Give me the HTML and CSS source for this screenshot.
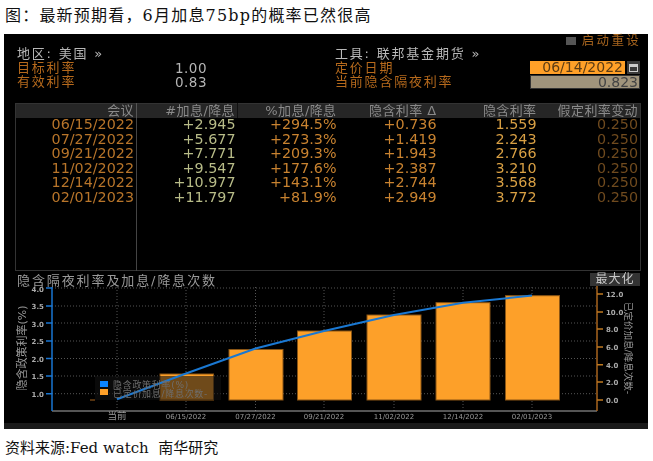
FILE: index.html
```html
<!DOCTYPE html>
<html lang="zh-CN">
<head>
<meta charset="utf-8">
<title>最新预期看</title>
<link rel="stylesheet" href="styles.css">
</head>
<body>
<h1 class="caption">图：最新预期看，6月加息75bp的概率已然很高</h1>
<main class="panel">
  <div class="reset"><span class="check"></span><span>启动重设</span></div>
  <section class="info">
    <div class="info-col">
      <div class="info-title">地区: 美国 »</div>
      <div class="info-row"><span class="lbl">目标利率</span><span class="val">1.00</span></div>
      <div class="info-row"><span class="lbl">有效利率</span><span class="val">0.83</span></div>
    </div>
    <div class="info-col right">
      <div class="info-title">工具: 联邦基金期货 »</div>
      <div class="info-row"><span class="lbl">定价日期</span>
        <span class="date-wrap"><span class="date-input">06/14/2022</span><span class="cal"><svg width="9" height="8" viewBox="0 0 9 8"><rect x="0.5" y="0.5" width="8" height="7" fill="none" stroke="#ccc"/><rect x="0" y="0" width="9" height="3" fill="#ccc"/></svg></span></span>
      </div>
      <div class="info-row"><span class="lbl">当前隐含隔夜利率</span><span class="rate-input">0.823</span></div>
    </div>
  </section>
  <table class="grid">
    <thead>
      <tr><th>会议</th><th>#加息/降息</th><th>%加息/降息</th><th>隐含利率 Δ</th><th>隐含利率</th><th>假定利率变动</th></tr>
    </thead>
    <tbody>
      <tr><td>06/15/2022</td><td>+2.945</td><td>+294.5%</td><td>+0.736</td><td>1.559</td><td>0.250</td></tr>
      <tr><td>07/27/2022</td><td>+5.677</td><td>+273.3%</td><td>+1.419</td><td>2.243</td><td>0.250</td></tr>
      <tr><td>09/21/2022</td><td>+7.771</td><td>+209.3%</td><td>+1.943</td><td>2.766</td><td>0.250</td></tr>
      <tr><td>11/02/2022</td><td>+9.547</td><td>+177.6%</td><td>+2.387</td><td>3.210</td><td>0.250</td></tr>
      <tr><td>12/14/2022</td><td>+10.977</td><td>+143.1%</td><td>+2.744</td><td>3.568</td><td>0.250</td></tr>
      <tr><td>02/01/2023</td><td>+11.797</td><td>+81.9%</td><td>+2.949</td><td>3.772</td><td>0.250</td></tr>
      <tr class="filler"><td></td><td></td><td></td><td></td><td></td><td></td></tr>
    </tbody>
  </table>
  <div class="chart-head"><span class="chart-title">隐含隔夜利率及加息/降息次数</span><span class="maxbtn">最大化</span></div>
  <svg class="chart" width="644" height="137" viewBox="4 286 644 137" xmlns="http://www.w3.org/2000/svg">
    <g class="gridlines">
      <path d="M52 288H597M52 306H597M52 323H597M52 341H597M52 358.5H597M52 376H597M52 393.7H597"/>
      <path d="M117 287V411M186 287V411M255.500 287V411M324 287V411M394 287V411M463 287V411M532 287V411"/>
    </g>
    <rect class="stub" x="90" y="399.500" width="5" height="1"/>
    <g class="bars">
      <rect x="160" y="374" width="53.500" height="26"/>
      <rect x="229" y="349.500" width="54" height="50.500"/>
      <rect x="297.500" y="331" width="54" height="69"/>
      <rect x="367" y="315" width="54" height="85"/>
      <rect x="436" y="302.700" width="54" height="97.300"/>
      <rect x="505.500" y="295.700" width="54" height="104.300"/>
    </g>
    <rect class="legend-bg" x="95" y="376" width="126" height="24"/>
    <polyline class="curve" points="117,399.300 186,373.500 255.500,348.500 324,331 394,315 463,302.700 532,295.600"/>
    <rect class="sw-blue" x="100" y="381" width="8" height="6"/>
    <rect class="sw-orange" x="100" y="389" width="8" height="6"/>
    <text class="legend-text" x="113" y="388">隐含政策利率(%)</text>
    <text class="legend-text" x="113" y="396.500">已定价加息/降息次数-</text>
    <path class="axis-x" d="M52 411H597"/>
    <path class="axis-l" d="M52 287V411"/>
    <path class="ticks-l" d="M46 288H52M46 306H52M46 323H52M46 341H52M46 358.500H52M46 376H52M46 393.700H52"/>
    <path class="axis-r" d="M597 286V411"/>
    <path class="ticks-r" d="M597 294H603M597 312H603M597 329H603M597 347H603M597 364.700H603M597 382H603M597 400H603"/>
    <g class="tick-l">
      <text x="44" y="292">4.0</text><text x="44" y="309">3.5</text><text x="44" y="326.500">3.0</text><text x="44" y="344">2.5</text><text x="44" y="361.500">2.0</text><text x="44" y="379">1.5</text><text x="44" y="396.500">1.0</text>
    </g>
    <g class="tick-r">
      <text x="606" y="297">12.0</text><text x="606" y="315">10.0</text><text x="606" y="332">8.0</text><text x="606" y="350">6.0</text><text x="606" y="367.500">4.0</text><text x="606" y="385">2.0</text><text x="606" y="403">0.0</text>
    </g>
    <g class="tick-x">
      <text class="now" x="117" y="419">当前</text><text x="186" y="419">06/15/2022</text><text x="255.500" y="419">07/27/2022</text><text x="324" y="419">09/21/2022</text><text x="394" y="419">11/02/2022</text><text x="463" y="419">12/14/2022</text><text x="532" y="419">02/01/2023</text>
    </g>
    <text class="axis-title left" transform="translate(26 348) rotate(-90)">隐含政策利率(%)</text>
    <text class="axis-title" transform="translate(625 348) rotate(90)">已定价加息/降息次数-</text>
  </svg>
  <div class="strip"></div>
</main>
<p class="source">资料来源:Fed watch&nbsp; 南华研究</p>
</body>
</html>
```
FILE: styles.css
```css
* { box-sizing: border-box; }
html, body { margin: 0; padding: 0; background: #fff; }
body {
  width: 653px;
  height: 461px;
  overflow: hidden;
  font-family: "DejaVu Serif", "Noto Sans CJK SC", serif;
  color: #111;
}
.caption {
  margin: 0;
  height: 34px;
  padding: 6px 0 0 5px;
  font-size: 16px;
  line-height: 20px;
  font-weight: 400;
  letter-spacing: 1.200px;
}
.panel {
  margin-left: 4px;
  width: 644px;
  height: 395px;
  background: #000;
  display: flex;
  flex-direction: column;
  font-family: "DejaVu Sans", "Noto Sans CJK SC", sans-serif;
  filter: blur(0.45px);
}
.reset {
  height: 12px;
  display: flex;
  justify-content: flex-end;
  align-items: center;
  gap: 6px;
  padding: 2px 7px 0 0;
  font-size: 12.500px;
  line-height: 12px;
  letter-spacing: 2.300px;
  color: #a8651e;
}
.check { width: 10px; height: 8px; background: #555; }
.info {
  height: 44px;
  display: flex;
  padding: 0 8px 0 13px;
  font-size: 13px;
}
.info-col { width: 318px; }
.info-col.right { flex: 1; }
.info-title {
  height: 15px;
  line-height: 15px;
  color: #b8b8b8;
  font-size: 13px;
  letter-spacing: 1.800px;
}
.info-row {
  display: flex;
  height: 14px;
  line-height: 14px;
  justify-content: space-between;
  align-items: center;
}
.info-col:first-child .info-row { width: 190px; }
.lbl { color: #b5691c; letter-spacing: 1.800px; font-size: 13px; }
.val { color: #b5b5b5; font-size: 13.500px; letter-spacing: 0.5px; }
.date-wrap { display: flex; gap: 2px; align-self: flex-start; }
.date-input {
  width: 95px;
  height: 13px;
  background: #ffa028;
  color: #5c3c14;
  font-size: 14px;
  line-height: 13px;
  text-align: right;
  padding-right: 2px;
}
.cal {
  width: 13px;
  height: 13px;
  background: #3a3a3a;
  display: flex;
  align-items: center;
  justify-content: center;
}
.rate-input {
  width: 110px;
  height: 14px;
  align-self: flex-start;
  background: #a0947c;
  border: 1px solid #333;
  color: #444;
  font-size: 14px;
  line-height: 12px;
  text-align: right;
  padding-right: 1px;
}
.grid {
  margin: 13px 0 0 11px;
  width: 626px;
  height: 168px;
  border-collapse: collapse;
  table-layout: fixed;
  border: 1px solid #333;
  font-size: 14.300px;
}
.grid th, .grid td { padding: 0 2px 0 0; text-align: right; white-space: nowrap; font-weight: 400; }
.grid th {
  height: 14px;
  line-height: 14px;
  font-size: 13px;
  color: #8a8a8a;
  background: #262626;
  letter-spacing: 0.4px;
}
.grid th:nth-child(1) { width: 121px; border-right: 1px solid #555; }
.grid th:nth-child(2) { width: 101px; border-right: 1px solid #111; }
.grid th:nth-child(3) { width: 101px; }
.grid th:nth-child(4) { width: 100px; }
.grid th:nth-child(5) { width: 100px; }
.grid td { height: 14.500px; line-height: 12px; vertical-align: top; }
.grid td:nth-child(1) { color: #b8752a; border-right: 1px solid #444; }
.grid td:nth-child(2) { color: #b8bc88; }
.grid td:nth-child(3) { color: #c98330; }
.grid td:nth-child(4) { color: #c98330; }
.grid td:nth-child(5) { color: #d9a044; }
.grid td:nth-child(6) { color: #6f4a1e; }
.grid .filler td { height: auto; }
.chart-head {
  height: 15px;
  display: flex;
  justify-content: space-between;
  align-items: center;
  padding: 1px 8px 0 13px;
}
.chart-title { color: #9a9a9a; font-size: 13px; letter-spacing: 1.900px; }
.maxbtn {
  width: 50px;
  height: 13px;
  background: #333;
  color: #c8c8c8;
  font-size: 12px;
  line-height: 13px;
  text-align: center;
  letter-spacing: 1px;
}
.chart { display: block; flex: none; overflow: visible; }
.gridlines path { fill: none; stroke: #555; stroke-width: 1; stroke-dasharray: 1 2; }
.stub { fill: #a8651e; }
.bars rect { fill: #fda029; stroke: #8a5514; stroke-width: 1; }
.legend-bg { fill: #111; fill-opacity: 0.6; }
.curve { fill: none; stroke: #1a78d2; stroke-width: 2; }
.sw-blue { fill: #0a84ff; }
.sw-orange { fill: #fda029; }
.legend-text { fill: #6e6e6e; font-size: 9px; letter-spacing: 0.7px; }
.axis-x { stroke: #aaa; fill: none; }
.axis-l { stroke: #1976d2; stroke-width: 1.500; fill: none; }
.ticks-l { stroke: #1976d2; stroke-width: 1.500; fill: none; }
.axis-r { stroke: #a8651e; stroke-width: 1.500; fill: none; }
.ticks-r { stroke: #c07a20; stroke-width: 1.500; fill: none; }
.tick-l text { fill: #aaa; font-size: 7px; text-anchor: end; font-weight: 700; }
.tick-r text { fill: #aaa; font-size: 7px; font-weight: 700; }
.tick-x text { fill: #999; font-size: 7px; text-anchor: middle; }
.tick-x .now { font-size: 9.500px; }
.axis-title { fill: #999; font-size: 9.500px; text-anchor: middle; }
.axis-title.left { font-size: 11px; }
.strip { flex: 1; background: #1a1a1a; }
.source {
  margin: 0;
  padding: 9px 0 0 5px;
  font-size: 15px;
  line-height: 20px;
}
```
